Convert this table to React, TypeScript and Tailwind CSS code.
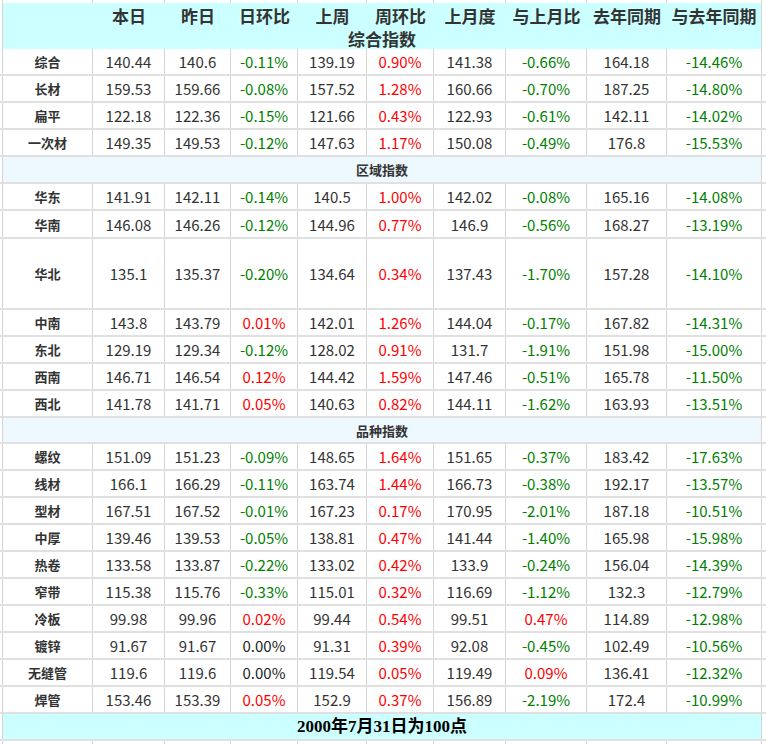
import React from 'react';

type Row = { name: string; values: string[]; h?: string };

const GRID = 'grid grid-cols-[3px_90px_72px_66px_67px_69px_67px_72px_81px_80px_95px_1fr]';

const headers = ['本日', '昨日', '日环比', '上周', '周环比', '上月度', '与上月比', '去年同期', '与去年同期'];

const overall: Row[] = [
  { name: '综合', values: ['140.44', '140.6', '-0.11%', '139.19', '0.90%', '141.38', '-0.66%', '164.18', '-14.46%'] },
  { name: '长材', values: ['159.53', '159.66', '-0.08%', '157.52', '1.28%', '160.66', '-0.70%', '187.25', '-14.80%'] },
  { name: '扁平', values: ['122.18', '122.36', '-0.15%', '121.66', '0.43%', '122.93', '-0.61%', '142.11', '-14.02%'] },
  { name: '一次材', values: ['149.35', '149.53', '-0.12%', '147.63', '1.17%', '150.08', '-0.49%', '176.8', '-15.53%'] },
];

const regions: Row[] = [
  { name: '华东', values: ['141.91', '142.11', '-0.14%', '140.5', '1.00%', '142.02', '-0.08%', '165.16', '-14.08%'] },
  { name: '华南', h: 'h-[28px]', values: ['146.08', '146.26', '-0.12%', '144.96', '0.77%', '146.9', '-0.56%', '168.27', '-13.19%'] },
  { name: '华北', h: 'h-[71px]', values: ['135.1', '135.37', '-0.20%', '134.64', '0.34%', '137.43', '-1.70%', '157.28', '-14.10%'] },
  { name: '中南', values: ['143.8', '143.79', '0.01%', '142.01', '1.26%', '144.04', '-0.17%', '167.82', '-14.31%'] },
  { name: '东北', values: ['129.19', '129.34', '-0.12%', '128.02', '0.91%', '131.7', '-1.91%', '151.98', '-15.00%'] },
  { name: '西南', values: ['146.71', '146.54', '0.12%', '144.42', '1.59%', '147.46', '-0.51%', '165.78', '-11.50%'] },
  { name: '西北', values: ['141.78', '141.71', '0.05%', '140.63', '0.82%', '144.11', '-1.62%', '163.93', '-13.51%'] },
];

const kinds: Row[] = [
  { name: '螺纹', values: ['151.09', '151.23', '-0.09%', '148.65', '1.64%', '151.65', '-0.37%', '183.42', '-17.63%'] },
  { name: '线材', values: ['166.1', '166.29', '-0.11%', '163.74', '1.44%', '166.73', '-0.38%', '192.17', '-13.57%'] },
  { name: '型材', values: ['167.51', '167.52', '-0.01%', '167.23', '0.17%', '170.95', '-2.01%', '187.18', '-10.51%'] },
  { name: '中厚', values: ['139.46', '139.53', '-0.05%', '138.81', '0.47%', '141.44', '-1.40%', '165.98', '-15.98%'] },
  { name: '热卷', values: ['133.58', '133.87', '-0.22%', '133.02', '0.42%', '133.9', '-0.24%', '156.04', '-14.39%'] },
  { name: '窄带', values: ['115.38', '115.76', '-0.33%', '115.01', '0.32%', '116.69', '-1.12%', '132.3', '-12.79%'] },
  { name: '冷板', values: ['99.98', '99.96', '0.02%', '99.44', '0.54%', '99.51', '0.47%', '114.89', '-12.98%'] },
  { name: '镀锌', values: ['91.67', '91.67', '0.00%', '91.31', '0.39%', '92.08', '-0.45%', '102.49', '-10.56%'] },
  { name: '无缝管', values: ['119.6', '119.6', '0.00%', '119.54', '0.05%', '119.49', '0.09%', '136.41', '-12.32%'] },
  { name: '焊管', values: ['153.46', '153.39', '0.05%', '152.9', '0.37%', '156.89', '-2.19%', '172.4', '-10.99%'] },
];

// percent cells: red up, green down, plain for zero
const tone = (v: string) => {
  if (!v.endsWith('%')) return 'text-[#333]';
  if (v.startsWith('-')) return 'text-[#008000]';
  if (parseFloat(v) === 0) return 'text-[#222]';
  return 'text-[#ff0000]';
};

const cell = 'flex items-center justify-center border-r border-r-[#d4d4d4]';

const Strip = ({ h }: { h: string }) => (
  <div className={`${GRID} ${h}`}>
    {Array.from({ length: 11 }).map((_, i) => (
      <div key={i} className="border-r border-r-[#d4d4d4]" />
    ))}
    <div />
  </div>
);

const DataRow = ({ row }: { row: Row }) => (
  <div className={`${GRID} ${row.h ?? 'h-[27px]'} border-b-2 border-b-[#e0e0e0]`}>
    <div className="border-r border-r-[#d4d4d4]" />
    <div className={`${cell} text-[13px] font-bold text-[#333]`}>{row.name}</div>
    {row.values.map((v, i) => (
      <div key={i} className={`${cell} text-[15px] ${tone(v)}`}>
        {v}
      </div>
    ))}
    <div />
  </div>
);

const SectionRow = ({ title, h }: { title: string; h: string }) => (
  <div className={`${GRID} ${h} border-b-2 border-b-[#e0e0e0]`}>
    <div className="border-r border-r-[#d4d4d4]" />
    <div className="col-span-10 flex items-center justify-center bg-[#eef8ff] border-r border-r-[#d4d4d4] text-[13px] font-bold text-[#333]">
      {title}
    </div>
    <div />
  </div>
);

export default function App() {
  return (
    <div className="w-[766px] h-[744px] overflow-hidden bg-white font-['Noto_Sans_CJK_SC',sans-serif] leading-none">
      <Strip h="h-[3px]" />

      <div className={`${GRID} h-[24px]`}>
        <div className="border-r border-r-[#d4d4d4]" />
        <div className="bg-[#ccffff]" />
        {headers.map((t, i) => (
          <div
            key={t}
            className={`flex items-center justify-center bg-[#ccffff] text-[17px] font-bold text-[#333] ${
              i === headers.length - 1 ? 'border-r border-r-[#d4d4d4]' : ''
            }`}
          >
            {t}
          </div>
        ))}
        <div />
      </div>
      <div className={`${GRID} h-[22px]`}>
        <div className="border-r border-r-[#d4d4d4]" />
        <div className="col-span-10 flex items-center justify-center bg-[#ccffff] border-r border-r-[#d4d4d4] text-[17px] font-bold text-[#333]">
          综合指数
        </div>
        <div />
      </div>

      {overall.map(r => (
        <DataRow key={r.name} row={r} />
      ))}
      <SectionRow title="区域指数" h="h-[27px]" />
      {regions.map(r => (
        <DataRow key={r.name} row={r} />
      ))}
      <SectionRow title="品种指数" h="h-[26px]" />
      {kinds.map(r => (
        <DataRow key={r.name} row={r} />
      ))}

      <div className={`${GRID} h-[27px] border-b-2 border-b-[#e0e0e0]`}>
        <div className="border-r border-r-[#d4d4d4]" />
        <div className="col-span-10 flex items-center justify-center bg-[#ccffff] border-r border-r-[#d4d4d4] font-['Liberation_Serif','Noto_Sans_CJK_SC',serif] text-[17px] font-bold text-black">
          2000年7月31日为100点
        </div>
        <div />
      </div>
      <Strip h="h-[10px]" />
    </div>
  );
}
